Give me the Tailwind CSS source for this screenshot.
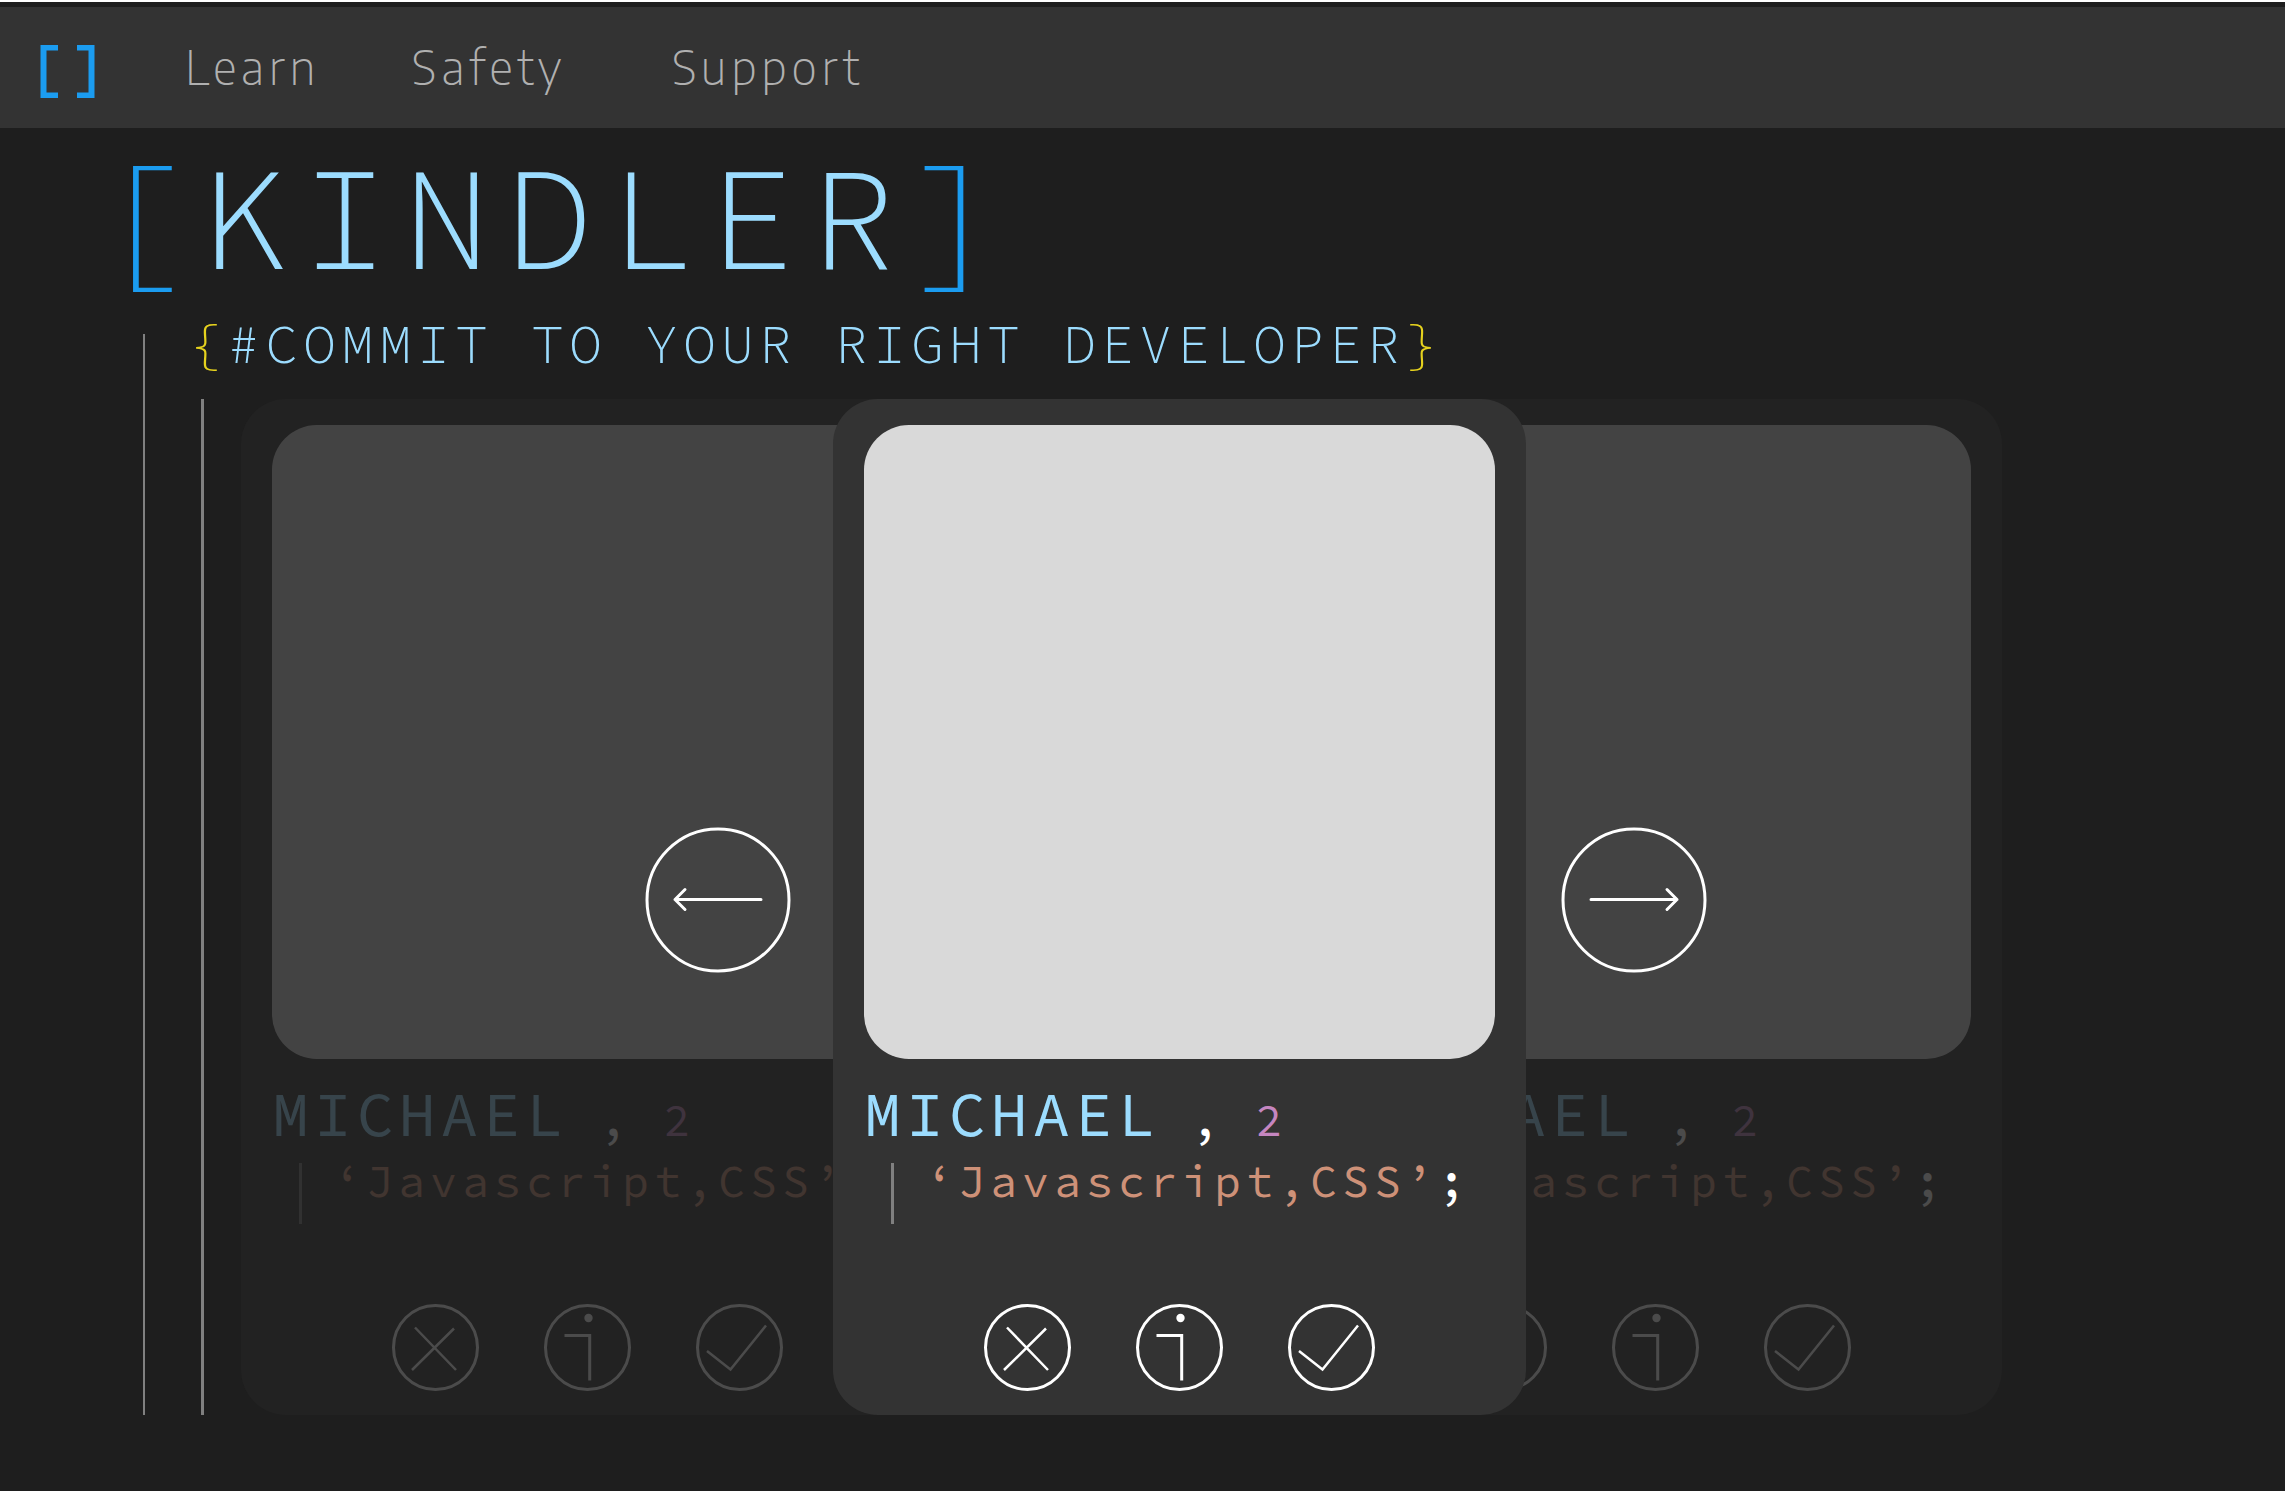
<!DOCTYPE html>
<html lang="en">
<head>
<meta charset="utf-8">
<title>Kindler</title>
<script src="https://cdn.jsdelivr.net/npm/@tailwindcss/browser@4"></script>
</head>
<body class="flex min-h-screen flex-col border-t-2 border-r-2 border-b-2 border-white bg-[#1e1e1e] font-['Source_Code_Pro','Liberation_Mono',monospace]">

<svg class="hidden" aria-hidden="true">
  <symbol id="cross" viewBox="0 0 87 87"><g fill="none" stroke="currentColor"><circle cx="43.500" cy="43.500" r="42" stroke-width="3"/><path d="M23 23.500 64 66M62 24.500 20 66" stroke-width="2.500"/></g></symbol>
  <symbol id="info" viewBox="0 0 87 87"><g fill="none" stroke="currentColor"><circle cx="43.500" cy="43.500" r="42" stroke-width="3"/><path d="M20.500 31.500H45.700V76.500" stroke-width="3"/></g><circle cx="44.500" cy="14" r="4.200" fill="currentColor"/></symbol>
  <symbol id="check" viewBox="0 0 87 87"><g fill="none" stroke="currentColor"><circle cx="43.500" cy="43.500" r="42" stroke-width="3"/><path d="M11 47 34.500 65.500 70 21.500" stroke-width="2.500"/></g></symbol>
</svg>

<header class="mt-[5px] flex h-[121px] items-center bg-[#333] pl-6">
  <a href="#" aria-label="Kindler home" class="pt-2 text-[#1b9cf0]">
    <svg class="ml-4 h-[53px] w-[55px]" viewBox="0 0 55 53" fill="none" stroke="currentColor" stroke-width="6"><path d="M18 2.500H3.500V50.500H18M37 2.500H51.500V50.500H37"/></svg>
  </a>
  <nav class="flex pb-1 font-['Encode_Sans','Noto_Sans',sans-serif] text-[47px] leading-[60px] font-extralight tracking-widest text-[#b0b0b0]">
    <a href="#" class="ml-[90px]">Learn</a>
    <a href="#" class="ml-[92px]">Safety</a>
    <a href="#" class="ml-[106px]">Support</a>
  </nav>
</header>

<main class="pb-[75px]">
  <h1 class="ml-[98px] mt-4 text-[146px] leading-[146px] font-light tracking-[14px] text-[#9cdcfe]"><span class="text-[#1b9cf0]">[</span>KINDLER<span class="text-[#1b9cf0]">]</span></h1>

  <div class="ml-[143px] mt-6 flex">
    <div class="mt-5 w-[2px] shrink-0 bg-[#808080]"></div>
    <div class="ml-14 grow">
      <p class="-ml-3 text-[55px] leading-[60px] font-light tracking-[5px] text-[#9cdcfe]"><span class="text-[#e6d21e]">{</span>#COMMIT TO YOUR RIGHT DEVELOPER<span class="text-[#e6d21e]">}</span></p>
      <div class="mt-[25px] flex">
        <div class="w-[3px] shrink-0 bg-[#808080]"></div>
        <div class="ml-[37px] grid w-full max-w-[1761px] grid-cols-[592fr_101fr_375fr_217fr_476fr]">

          <article class="col-start-1 col-end-3 row-start-1 rounded-[45px] bg-[#333] px-[31px] pt-[26px] pb-6 opacity-20">
            <div class="aspect-[631/634] rounded-[45px] bg-[#d9d9d9]"></div>
            <h2 class="mt-6 flex items-baseline text-[62px] leading-[62px] tracking-[5px] text-[#9cdcfe]">MICHAEL<span class="ml-8 text-[45px] leading-[45px] font-medium text-white">,</span><span class="ml-8 text-[45px] leading-[45px] text-[#c586c0]">2</span></h2>
            <div class="mt-[18px] flex h-[61px]">
              <div class="ml-[27px] w-[3px] bg-[#808080]"></div>
              <p class="ml-8 whitespace-nowrap text-[45px] leading-9 tracking-[5px] text-[#ce9178]">‘Javascript,CSS’<span class="font-medium text-white">;</span></p>
            </div>
            <div class="mt-20 flex justify-center gap-[65px] text-white">
              <button type="button" aria-label="Reject"><svg class="size-[87px]"><use href="#cross"/></svg></button>
              <button type="button" aria-label="Info"><svg class="size-[87px]"><use href="#info"/></svg></button>
              <button type="button" aria-label="Accept"><svg class="size-[87px]"><use href="#check"/></svg></button>
            </div>
          </article>

          <article class="col-start-4 col-end-6 row-start-1 rounded-[45px] bg-[#333] px-[31px] pt-[26px] pb-6 opacity-20">
            <div class="aspect-[631/634] rounded-[45px] bg-[#d9d9d9]"></div>
            <h2 class="mt-6 flex items-baseline text-[62px] leading-[62px] tracking-[5px] text-[#9cdcfe]">MICHAEL<span class="ml-8 text-[45px] leading-[45px] font-medium text-white">,</span><span class="ml-8 text-[45px] leading-[45px] text-[#c586c0]">2</span></h2>
            <div class="mt-[18px] flex h-[61px]">
              <div class="ml-[27px] w-[3px] bg-[#808080]"></div>
              <p class="ml-8 whitespace-nowrap text-[45px] leading-9 tracking-[5px] text-[#ce9178]">‘Javascript,CSS’<span class="font-medium text-white">;</span></p>
            </div>
            <div class="mt-20 flex justify-center gap-[65px] text-white">
              <button type="button" aria-label="Reject"><svg class="size-[87px]"><use href="#cross"/></svg></button>
              <button type="button" aria-label="Info"><svg class="size-[87px]"><use href="#info"/></svg></button>
              <button type="button" aria-label="Accept"><svg class="size-[87px]"><use href="#check"/></svg></button>
            </div>
          </article>

          <article class="z-10 col-start-2 col-end-5 row-start-1 rounded-[45px] bg-[#333] px-[31px] pt-[26px] pb-6">
            <div class="aspect-[631/634] rounded-[45px] bg-[#d9d9d9]"></div>
            <h2 class="mt-6 flex items-baseline text-[62px] leading-[62px] tracking-[5px] text-[#9cdcfe]">MICHAEL<span class="ml-8 text-[45px] leading-[45px] font-medium text-white">,</span><span class="ml-8 text-[45px] leading-[45px] text-[#c586c0]">2</span></h2>
            <div class="mt-[18px] flex h-[61px]">
              <div class="ml-[27px] w-[3px] bg-[#808080]"></div>
              <p class="ml-8 whitespace-nowrap text-[45px] leading-9 tracking-[5px] text-[#ce9178]">‘Javascript,CSS’<span class="font-medium text-white">;</span></p>
            </div>
            <div class="mt-20 flex justify-center gap-[65px] text-white">
              <button type="button" aria-label="Reject"><svg class="size-[87px]"><use href="#cross"/></svg></button>
              <button type="button" aria-label="Info"><svg class="size-[87px]"><use href="#info"/></svg></button>
              <button type="button" aria-label="Accept"><svg class="size-[87px]"><use href="#check"/></svg></button>
            </div>
          </article>

          <button type="button" aria-label="Previous" class="z-20 col-start-1 row-start-1 mt-[428px] mr-[42px] self-start justify-self-end text-white">
            <svg class="size-[146px]" viewBox="0 0 146 146" fill="none" stroke="currentColor" stroke-width="3" stroke-linecap="round" stroke-linejoin="round"><circle cx="73" cy="73" r="71"/><path d="M116 72.500H30M40 62.500 30 72.500 40 82.500"/></svg>
          </button>
          <button type="button" aria-label="Next" class="z-20 col-start-5 row-start-1 mt-[428px] ml-[35px] self-start justify-self-start text-white">
            <svg class="size-[146px]" viewBox="0 0 146 146" fill="none" stroke="currentColor" stroke-width="3" stroke-linecap="round" stroke-linejoin="round"><circle cx="73" cy="73" r="71"/><path d="M30 72.500H116M106 62.500 116 72.500 106 82.500"/></svg>
          </button>
        </div>
      </div>
    </div>
  </div>
</main>
</body>
</html>
